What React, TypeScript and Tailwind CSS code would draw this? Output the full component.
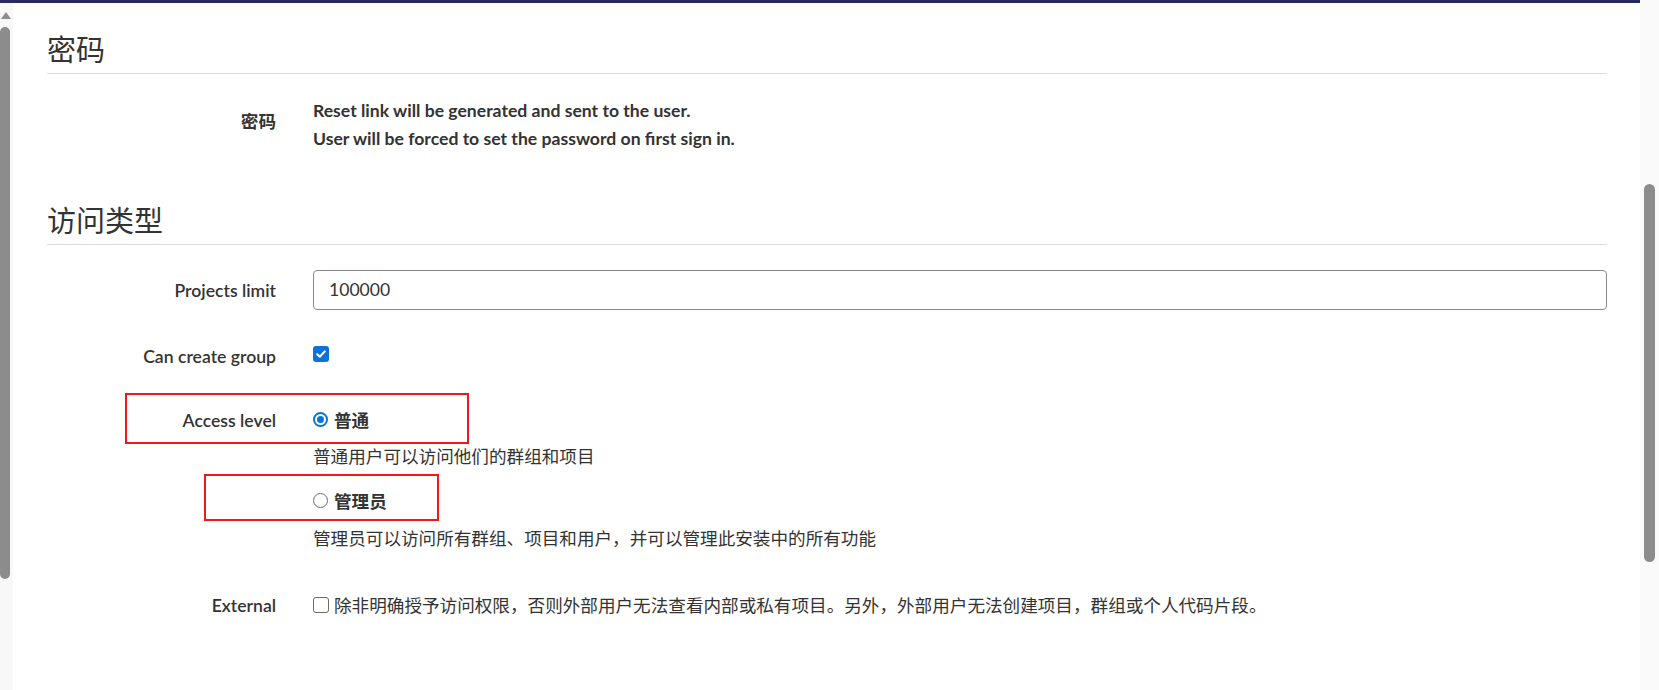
import React from 'react';

const font = { fontFamily: 'Lato, "Noto Sans CJK SC", sans-serif' };

function Heading({ children }: { children: React.ReactNode }) {
  return (
    <div className="border-b border-[#dcdcdc] pb-[3px] text-[29px] leading-[40px] text-[#333]">
      {children}
    </div>
  );
}

function Label({ children, className = '' }: { children: React.ReactNode; className?: string }) {
  return (
    <div className={`w-[229px] shrink-0 text-right font-semibold text-[#333] ${className}`}>{children}</div>
  );
}

function CheckBox({ checked }: { checked?: boolean }) {
  return checked ? (
    <span className="flex h-4 w-4 items-center justify-center rounded-[3px] bg-[#0b72d9]">
      <svg width="12" height="12" viewBox="0 0 12 12">
        <path d="M2.2 6.3 L4.8 8.8 L9.8 3.4" stroke="white" strokeWidth="2" fill="none" strokeLinecap="round" strokeLinejoin="round" />
      </svg>
    </span>
  ) : (
    <span className="block h-4 w-4 rounded-[3px] border border-[#6b6b6b] bg-white" />
  );
}

function Radio({ checked }: { checked?: boolean }) {
  return checked ? (
    <span className="flex h-[15px] w-[15px] items-center justify-center rounded-full border-2 border-[#0b72d9] bg-white">
      <span className="block h-[7px] w-[7px] rounded-full bg-[#0b72d9]" />
    </span>
  ) : (
    <span className="block h-[15px] w-[15px] rounded-full border border-[#6b6b6b] bg-white" />
  );
}

export default function App() {
  return (
    <div className="relative flex h-[690px] w-[1659px] overflow-hidden bg-white text-[17.6px] text-[#333]" style={font}>
      <div className="flex flex-1 flex-col">
        <div className="h-[3px] bg-[#29285f]" />
        <div className="flex flex-1">
          {/* left frame scrollbar */}
          <div className="flex w-[13px] flex-col bg-[#f8f8f8]">
            <div className="mt-[9px] ml-[1px] h-0 w-0 border-x-[5px] border-b-[7px] border-x-transparent border-b-[#8c8c8c]" />
            <div className="mt-[8px] h-[552px] w-[10px] rounded-b-[5px] rounded-t-[5px] bg-[#8c8c8c]" />
          </div>

          <div className="flex-1 pl-[34px] pr-[33px]">
            <div className="pt-[27px]">
              <Heading>密码</Heading>
            </div>

            <div className="mt-[23px] flex leading-[28px]">
              <Label className="pt-[11px]">密码</Label>
              <div className="ml-[37px] font-bold">
                <div>Reset link will be generated and sent to the user.</div>
                <div>User will be forced to set the password on first sign in.</div>
              </div>
            </div>

            <div className="mt-[48px]">
              <Heading>访问类型</Heading>
            </div>

            <div className="mt-[25px] flex h-[40px] items-center">
              <Label className="pt-[3px]">Projects limit</Label>
              <div className="ml-[37px] flex h-[40px] flex-1 items-center rounded-[4px] border border-[#8a8a8a] px-[15px] font-normal">
                100000
              </div>
            </div>

            <div className="mt-[33px] flex h-[28px] items-center leading-[28px]">
              <Label>Can create group</Label>
              <div className="ml-[37px] mt-[-6px]">
                <CheckBox checked />
              </div>
            </div>

            <div className="mt-[36px] flex leading-[28px]">
              <Label>Access level</Label>
              <div className="ml-[37px]">
                <div className="flex h-[28px] items-center gap-[6px] font-bold">
                  <span className="mt-[-3px]"><Radio checked /></span>
                  <span>普通</span>
                </div>
                <div className="mt-[8px]">普通用户可以访问他们的群组和项目</div>
                <div className="mt-[17px] flex h-[28px] items-center gap-[6px] font-bold">
                  <span className="mt-[-3px]"><Radio /></span>
                  <span>管理员</span>
                </div>
                <div className="mt-[9px]">管理员可以访问所有群组、项目和用户，并可以管理此安装中的所有功能</div>
              </div>
            </div>

            <div className="mt-[39px] flex leading-[28px]">
              <Label>External</Label>
              <div className="ml-[37px] flex items-center gap-[5px]">
                <span className="mt-[-3px]"><CheckBox /></span>
                <span>除非明确授予访问权限，否则外部用户无法查看内部或私有项目。另外，外部用户无法创建项目，群组或个人代码片段。</span>
              </div>
            </div>
          </div>
        </div>
      </div>

      {/* browser scrollbar */}
      <div className="w-[19px] bg-[#fafafa] pl-[4px] pt-[184px]">
        <div className="h-[378px] w-[11px] rounded-full bg-[#8c8c8c]" />
      </div>

      {/* annotation boxes */}
      <div className="absolute left-[125px] top-[393px] h-[51px] w-[344px] border-2 border-[#f01919]" />
      <div className="absolute left-[204px] top-[474px] h-[47px] w-[235px] border-2 border-[#f01919]" />
    </div>
  );
}
